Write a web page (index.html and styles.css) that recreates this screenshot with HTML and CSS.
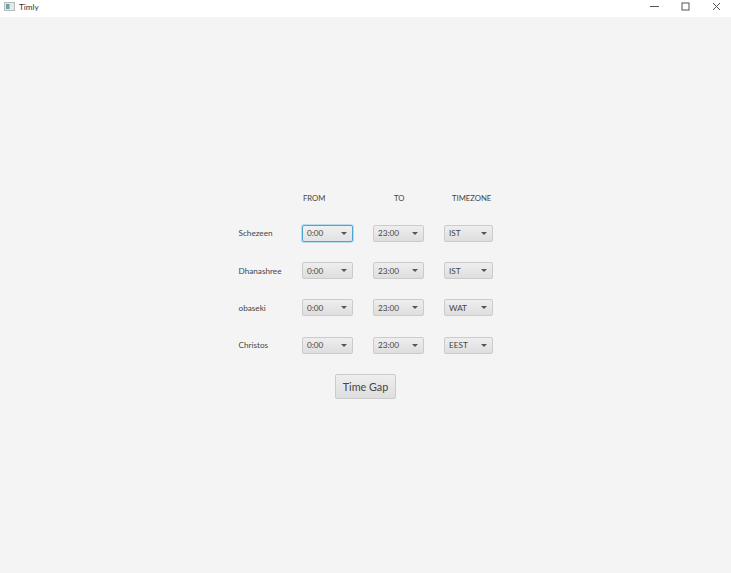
FILE: index.html
```html
<!DOCTYPE html>
<html lang="en">
<head>
    <meta charset="UTF-8">
    <meta name="viewport" content="width=device-width, initial-scale=1.0">
    <title>Timly</title>
    <link rel="stylesheet" href="styles.css">
</head>
<body>
    <div class="titlebar">
        <div class="app-title">
            <svg class="app-icon" width="11" height="9" viewBox="0 0 11 9">
                <rect x="0.5" y="0.5" width="10" height="8" fill="#e4eaea" stroke="#b4bcbc"/>
                <rect x="2" y="2" width="3.5" height="5" fill="#6fa39d"/>
            </svg>
            <span>Timly</span>
        </div>
        <div class="window-controls">
            <svg width="9" height="9" viewBox="0 0 9 9"><path d="M0 4.5H9" stroke="#555" fill="none"/></svg>
            <svg width="9" height="9" viewBox="0 0 9 9"><rect x="1" y="1" width="7" height="7" stroke="#555" fill="none"/></svg>
            <svg width="9" height="9" viewBox="0 0 9 9"><path d="M1 1L8 8M8 1L1 8" stroke="#555" fill="none"/></svg>
        </div>
    </div>

    <div class="content">
        <div class="form">
            <div class="form-grid">
                <div></div>
                <div class="heading heading-from">FROM</div>
                <div class="heading heading-to">TO</div>
                <div class="heading heading-zone">TIMEZONE</div>

                <div class="name">Schezeen</div>
                <div class="select focused"><span>0:00</span><i class="arrow"></i></div>
                <div class="select"><span>23:00</span><i class="arrow"></i></div>
                <div class="select"><span>IST</span><i class="arrow"></i></div>

                <div class="name">Dhanashree</div>
                <div class="select"><span>0:00</span><i class="arrow"></i></div>
                <div class="select"><span>23:00</span><i class="arrow"></i></div>
                <div class="select"><span>IST</span><i class="arrow"></i></div>

                <div class="name">obaseki</div>
                <div class="select"><span>0:00</span><i class="arrow"></i></div>
                <div class="select"><span>23:00</span><i class="arrow"></i></div>
                <div class="select"><span>WAT</span><i class="arrow"></i></div>

                <div class="name">Christos</div>
                <div class="select"><span>0:00</span><i class="arrow"></i></div>
                <div class="select"><span>23:00</span><i class="arrow"></i></div>
                <div class="select"><span>EEST</span><i class="arrow"></i></div>
            </div>
            <button class="gap-btn">Time Gap</button>
        </div>
    </div>
</body>
</html>
```

FILE: styles.css
```css
* {
    margin: 0;
    padding: 0;
    box-sizing: border-box;
}

body {
    width: 731px;
    height: 573px;
    overflow: hidden;
    background: #f4f4f4;
    font-family: 'Lato', sans-serif;
    color: #444;
    display: flex;
    flex-direction: column;
}

.titlebar {
    height: 17px;
    padding-bottom: 4px;
    background: white;
    display: flex;
    justify-content: space-between;
    align-items: center;
}

.app-title {
    display: flex;
    align-items: center;
    gap: 4px;
    padding-left: 4px;
    font-size: 8.2px;
    color: #333;
}

.window-controls {
    display: flex;
    gap: 22px;
    padding-right: 10px;
}

.content {
    flex: 1;
    padding: 174.4px 0 0 238px;
}

.form {
    width: 255px;
    display: flex;
    flex-direction: column;
    align-items: center;
}

.form-grid {
    display: grid;
    grid-template-columns: 44px 51px 51px 49px;
    column-gap: 20px;
    row-gap: 20.33px;
    align-items: center;
    font-size: 8.2px;
}

.heading {
    height: 13px;
    line-height: 14px;
    font-size: 7.7px;
    white-space: nowrap;
}

.heading-from {
    padding-left: 1px;
}

.heading-to {
    padding-left: 21px;
}

.heading-zone {
    padding-left: 8px;
}

.name {
    padding-left: 0.5px;
    white-space: nowrap;
}

.select {
    height: 17px;
    padding: 0 5px 0 4px;
    display: flex;
    align-items: center;
    justify-content: space-between;
    border: 1px solid #cbcbcb;
    border-radius: 2px;
    background: linear-gradient(#eeeeee, #dedede);
}

.select.focused {
    border-color: #4ea6d0;
    box-shadow: 0 0 0 1px #b5dcef;
    background: linear-gradient(#f0f0f0, #e2e2e2);
}

.arrow {
    width: 0;
    height: 0;
    margin-right: 0.5px;
    border-left: 3px solid transparent;
    border-right: 3px solid transparent;
    border-top: 3px solid #555;
}

.gap-btn {
    width: 61px;
    height: 25px;
    margin-top: 20.2px;
    border: 1px solid #cbcbcb;
    border-radius: 2px;
    background: linear-gradient(#eeeeee, #dedede);
    font-family: inherit;
    font-size: 10.8px;
    color: #444;
}
```
